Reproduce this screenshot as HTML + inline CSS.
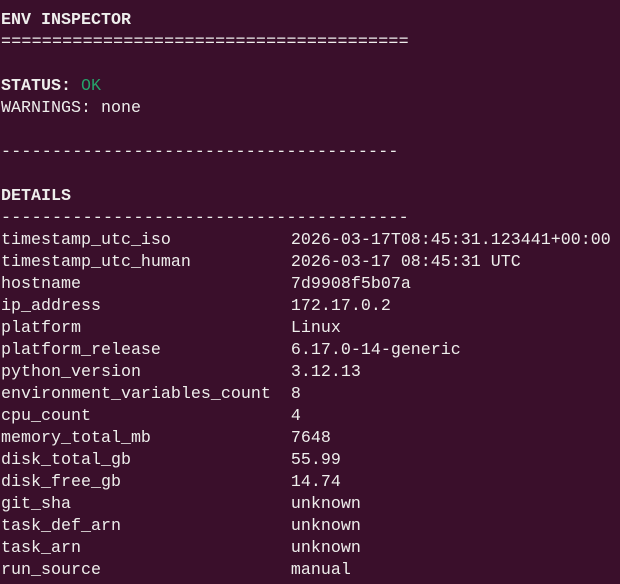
<!DOCTYPE html>
<html><head><meta charset="utf-8"><style>
html,body{margin:0;padding:0;background:#3a0f2b;width:620px;height:584px;overflow:hidden}
pre{margin:0;padding:10px 0 0 1px;font-family:"Liberation Mono","DejaVu Sans Mono",monospace;font-size:16.67px;line-height:22px;color:#eeeeec;white-space:pre}
b{font-weight:bold}
.g{color:#26a269}
.w{letter-spacing:0.2px}
</style></head><body><pre><b>ENV INSPECTOR</b>
<span class="w">========================================</span>

<b>STATUS:</b> <span class="g">OK</span>
WARNINGS: none

<span class="w">---------------------------------------</span>

<b>DETAILS</b>
<span class="w">----------------------------------------</span>
timestamp_utc_iso            2026-03-17T08:45:31.123441+00:00
timestamp_utc_human          2026-03-17 08:45:31 UTC
hostname                     7d9908f5b07a
ip_address                   172.17.0.2
platform                     Linux
platform_release             6.17.0-14-generic
python_version               3.12.13
environment_variables_count  8
cpu_count                    4
memory_total_mb              7648
disk_total_gb                55.99
disk_free_gb                 14.74
git_sha                      unknown
task_def_arn                 unknown
task_arn                     unknown
run_source                   manual</pre></body></html>
